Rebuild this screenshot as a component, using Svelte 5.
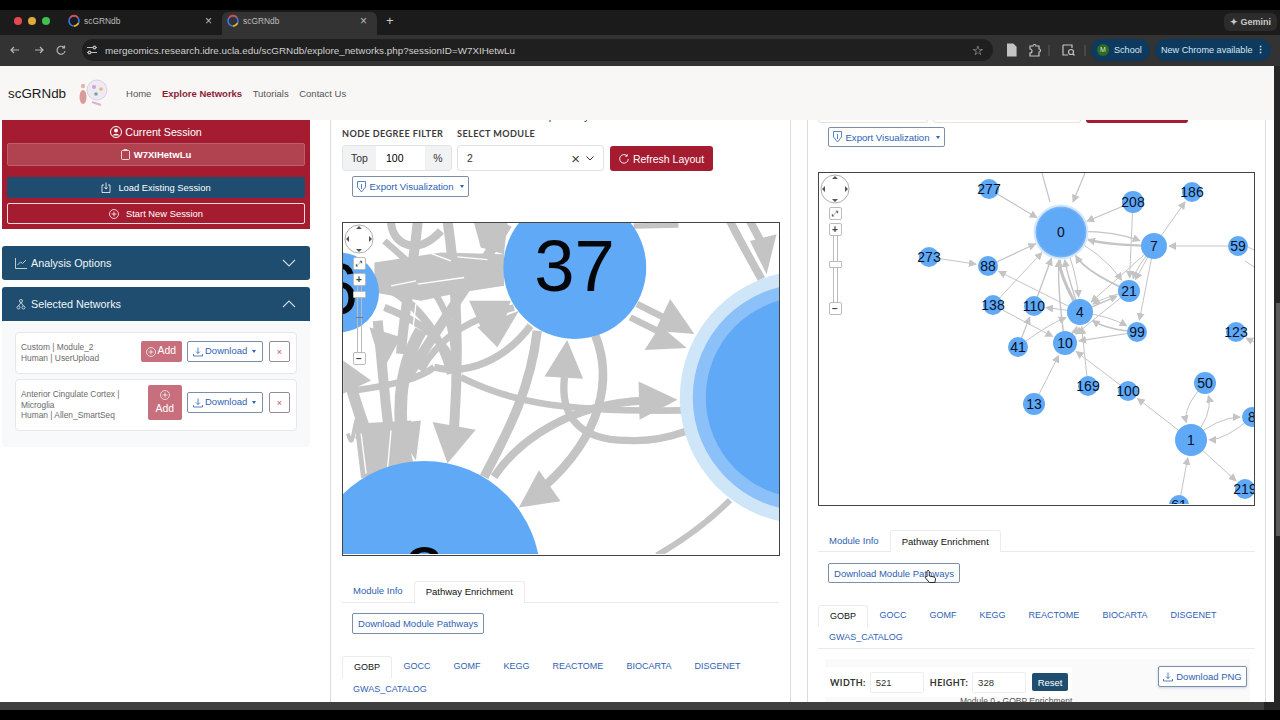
<script lang="ts">
  type GraphNode = { id: string; x: number; y: number; r: number }

  const nodes: GraphNode[] = [
    { id: '277', x: 171, y: 17, r: 10 },
    { id: '208', x: 315, y: 30, r: 11 },
    { id: '186', x: 374, y: 20, r: 10 },
    { id: '7', x: 336, y: 74, r: 13 },
    { id: '59', x: 420, y: 74, r: 10 },
    { id: '273', x: 111, y: 85, r: 10 },
    { id: '88', x: 170, y: 94, r: 10 },
    { id: '21', x: 311, y: 119, r: 11 },
    { id: '138', x: 175, y: 133, r: 10 },
    { id: '110', x: 216, y: 134, r: 10 },
    { id: '4', x: 262, y: 140, r: 13 },
    { id: '99', x: 319, y: 160, r: 10 },
    { id: '123', x: 418, y: 160, r: 10 },
    { id: '41', x: 200, y: 175, r: 10 },
    { id: '10', x: 247, y: 171, r: 12 },
    { id: '169', x: 270, y: 214, r: 10 },
    { id: '100', x: 310, y: 219, r: 10 },
    { id: '13', x: 216, y: 232, r: 11 },
    { id: '50', x: 387, y: 211, r: 11 },
    { id: '8', x: 434, y: 245, r: 10 },
    { id: '1', x: 373, y: 268, r: 16 },
    { id: '219', x: 427, y: 317, r: 10 },
    { id: '61', x: 361, y: 333, r: 10 }
  ]

  const hub = { id: '0', x: 243, y: 60, r: 26 }
  const byId = Object.fromEntries([...nodes, hub].map((n) => [n.id, n]))

  // from, to, bend, stroke width
  const edges: [string, string, number, number][] = [
    ['277', '0', 0, 1.2], ['208', '0', 0, 1.2], ['7', '186', 0, 1], ['59', '7', 0, 1],
    ['273', '88', 0, 1], ['88', '0', 0, 1.2], ['138', '0', 0, 1], ['110', '0', 0, 1.4],
    ['4', '0', -12, 3], ['4', '0', -4, 1.4], ['10', '0', -6, 1.4], ['0', '4', -6, 1],
    ['7', '0', -6, 2.4], ['0', '7', -10, 1.2], ['21', '0', -14, 1.8], ['0', '21', -12, 1],
    ['208', '21', 0, 1], ['7', '21', 0, 1], ['7', '21', 5, 1], ['7', '99', 0, 1],
    ['7', '4', 0, 1], ['4', '88', 0, 1], ['4', '21', 0, 1.4], ['21', '4', 4, 1],
    ['4', '110', 0, 1], ['4', '99', -6, 1], ['99', '4', -8, 1.4], ['99', '10', 0, 1.2],
    ['21', '10', 0, 1], ['10', '4', 4, 1], ['41', '4', -5, 1], ['41', '110', 0, 1.2],
    ['138', '10', 0, 1], ['13', '10', 0, 1], ['169', '4', 0, 1], ['100', '10', 0, 1],
    ['1', '100', 0, 1], ['1', '50', 16, 1], ['50', '1', 16, 1], ['1', '8', -12, 1],
    ['8', '1', -12, 1], ['1', '219', 0, 1], ['61', '1', 0, 1]
  ]

  function edgePath(from: string, to: string, bend: number) {
    const a = byId[from]
    const b = byId[to]
    const dx = b.x - a.x
    const dy = b.y - a.y
    const len = Math.hypot(dx, dy)
    const ux = dx / len
    const uy = dy / len
    const mx = (a.x + b.x) / 2 - uy * bend
    const my = (a.y + b.y) / 2 + ux * bend
    const tx = b.x - mx
    const ty = b.y - my
    const tl = Math.hypot(tx, ty)
    const ex = b.x - (tx / tl) * (b.r + 2)
    const ey = b.y - (ty / tl) * (b.r + 2)
    return `M${a.x} ${a.y}Q${mx} ${my} ${ex} ${ey}`
  }

  const subTabs = ['GOCC', 'GOMF', 'KEGG', 'REACTOME', 'BIOCARTA', 'DISGENET']
  const sessions = [
    { lines: ['Custom | Module_2', 'Human | UserUpload'], stacked: false },
    { lines: ['Anterior Cingulate Cortex |', 'Microglia', 'Human | Allen_SmartSeq'], stacked: true }
  ]

  // big strokes of the zoomed-in left graph, traced in 3x coordinates
  const zoomedEdges: [string, number][] = [
    ['M590 330C570 500 510 620 430 770', 28],
    ['M765 345C815 470 790 640 610 800', 26],
    ['M672 470C660 570 700 660 860 660C930 665 990 650 1040 632', 22],
    ['M360 470C500 540 640 575 1030 570', 20],
    ['M460 770C540 650 700 550 910 540', 24],
    ['M890 250L980 295', 20],
    ['M870 290L960 335', 20],
    ['M1170 840C1110 900 1030 960 950 1006', 18],
    ['M1170 0C1200 60 1240 130 1265 175', 24],
    ['M1230 0L1275 85', 24],
    ['M880 15L1015 12', 16],
    ['M150 0C150 70 230 110 300 30', 24],
    ['M320 0C350 200 355 400 340 620', 30],
    ['M200 740C165 600 170 450 240 330', 38],
    ['M570 315C490 420 380 465 280 440', 22],
    ['M280 440C240 470 180 490 40 510', 20],
    ['M130 60C300 200 350 300 340 460', 20],
    ['M500 10C430 130 300 300 200 470', 30],
    ['M100 180C230 240 300 340 330 460', 24],
    ['M130 260C260 310 330 380 340 450', 22],
    ['M240 450C300 340 400 290 520 260', 20],
    ['M30 500C60 600 90 690 140 760', 34],
    ['M110 300C130 500 140 650 160 740', 30],
    ['M20 640C40 700 30 620 60 560', 12],
    ['M230 5C220 120 190 260 180 400', 30]
  ]
  const zoomedHeads = [
    '100,125 300,95 490,100 490,195 360,215 240,240 100,215',
    '400,6 500,6 490,100 420,80',
    '40,610 210,600 210,740 60,775',
    '595,750 660,843 535,862',
    '680,358 728,475 612,468',
    '895,483 1012,538 898,598',
    '990,235 1063,340 945,330',
    '960,315 1040,382 913,388',
    '1310,40 1280,160 1230,60',
    '275,605 405,628 320,730',
    '385,240 510,240 470,380 420,320',
    '535,270 470,380 410,320',
    '85,320 180,350 125,450',
    '240,600 225,720 150,610',
    '40,650 130,620 120,730',
    '6,420 90,480 6,520'
  ]
  // thin gaps left between the overlapping strokes
  const zoomedGaps = ['M350 108L440 116', 'M230 190L370 170', 'M150 195L225 180', 'M250 90L330 120', 'M225 250L215 330', 'M60 640L75 760', 'M150 630L140 740']
</script>

<div class="browser">
  <div class="tabstrip">
    <div class="lights"><i class="red"></i><i class="amber"></i><i class="green"></i></div>
    {#each [0, 1] as t}
      <div class="tab" class:active={t === 1}>
        <svg width="14" height="14" viewBox="0 0 14 14"><circle cx="7" cy="7" r="5" fill="none" stroke="#3b78e7" stroke-width="1.6" /><path d="M3 3.500A5 5 0 0 1 11 3.500" fill="none" stroke="#e8493a" stroke-width="1.6" /><path d="M11.500 9A5 5 0 0 1 7 12" fill="none" stroke="#f5b400" stroke-width="1.6" /></svg>
        <span>scGRNdb</span>
        <b>×</b>
      </div>
    {/each}
    <span class="newtab">+</span>
    <div class="gemini">✦ Gemini</div>
  </div>
  <div class="toolbar">
    <svg class="nav" width="60" height="14" viewBox="0 0 60 14" fill="none" stroke="#b5b5b5" stroke-width="1.2"><path d="M11 7H3M6 4 3 7l3 3M27 7h8M32 4l3 3-3 3M56 4.500A4 4 0 1 0 57 8M56.500 2.500v2.500H54" /></svg>
    <div class="omnibox">
      <svg width="14" height="14" viewBox="0 0 14 14" fill="none" stroke="#bbb" stroke-width="1.2"><path d="M2 4.500h6M11 4.500h1M2 9.500h1M6 9.500h6" /><circle cx="9.500" cy="4.500" r="1.300" /><circle cx="4.500" cy="9.500" r="1.300" /></svg>
      <span class="url">mergeomics.research.idre.ucla.edu/scGRNdb/explore_networks.php?sessionID=W7XIHetwLu</span>
      <span class="star">☆</span>
    </div>
    <svg class="tools" width="84" height="16" viewBox="0 0 84 16" fill="none" stroke="#c4c4c4" stroke-width="1.2"><path d="M0 2h6l3 3v9H0z" fill="#c4c4c4" /><path d="M23 4h3a1.500 1.500 0 0 1 3 0h3v3a1.500 1.500 0 0 1 0 3v4H23v-3a1.500 1.500 0 0 0 0-4z" /><path d="M42 3v11" stroke="#555" /><path d="M56 3h9v3M56 3v10h5" /><circle cx="64" cy="10" r="2.500" /><path d="M66 12l1.500 1.500" /><path d="M78 3v11" stroke="#555" /></svg>
    <div class="pill school"><i>M</i>School</div>
    <div class="pill update">New Chrome available <b>⋮</b></div>
  </div>
</div>

<div class="frame">
  <div class="page">
    <header class="topnav">
      <span class="brand">scGRNdb</span>
      <svg class="logo" width="34" height="30" viewBox="0 0 34 30">
        <ellipse cx="8" cy="19" rx="3.500" ry="7" fill="#d99a9a" />
        <circle cx="8" cy="8" r="2.200" fill="#e2b5a8" />
        <circle cx="22" cy="12" r="10" fill="#efe9f3" stroke="#ddd2e4" />
        <circle cx="19" cy="9" r="2" fill="#c9a4d6" />
        <circle cx="26" cy="11" r="1.800" fill="#e6b86c" />
        <circle cx="21" cy="16" r="1.800" fill="#6fa99a" />
        <path d="M17 24l9 3" stroke="#d8b4c8" stroke-width="2" />
      </svg>
      <nav>
        <a href="#home">Home</a>
        <a href="#explore" class="current">Explore Networks</a>
        <a href="#tutorials">Tutorials</a>
        <a href="#contact">Contact Us</a>
      </nav>
    </header>

    <div class="workspace">
      <aside class="sidebar">
        <section class="session">
          <h2>
            <svg width="12" height="12" viewBox="0 0 12 12"><circle cx="6" cy="6" r="5.500" fill="none" stroke="#fff" /><circle cx="6" cy="4.500" r="2" fill="#fff" /><path d="M2.500 9.500a3.800 3 0 0 1 7 0" fill="#fff" /></svg>
            Current Session
          </h2>
          <div class="session-id">
            <svg width="9" height="11" viewBox="0 0 9 11" fill="none" stroke="#fff" stroke-width=".8"><rect x=".5" y="1.500" width="8" height="9" rx="1" /><path d="M3 1.500V.5h3v1" /></svg>
            W7XIHetwLu
          </div>
          <button class="load">
            <svg width="10" height="11" viewBox="0 0 10 11" fill="none" stroke="#fff" stroke-width=".8"><path d="M3 3H1v7.500h8V3H7M5 .5V7M3.300 5.300 5 7l1.700-1.700" /></svg>
            Load Existing Session
          </button>
          <button class="start">
            <svg width="10" height="10" viewBox="0 0 10 10" fill="none" stroke="#fff" stroke-width=".8"><circle cx="5" cy="5" r="4.500" /><path d="M5 2.500v5M2.500 5h5" /></svg>
            Start New Session
          </button>
        </section>

        <div class="accordion">
          <div class="acc-head">
            <svg width="12" height="12" viewBox="0 0 12 12" fill="none" stroke="#cfdbe5" stroke-width=".9"><path d="M.5 1v10.500H12M2.500 8l3-3 2 1.500L11 3" /></svg>
            <span>Analysis Options</span>
            <svg class="chev" width="14" height="8" viewBox="0 0 14 8" fill="none" stroke="#cfdbe5" stroke-width="1.100"><path d="M1 1l6 6 6-6" /></svg>
          </div>
        </div>

        <div class="accordion">
          <div class="acc-head">
            <svg width="12" height="12" viewBox="0 0 12 12" fill="none" stroke="#cfdbe5" stroke-width=".9"><circle cx="6" cy="3" r="1.500" /><circle cx="3.500" cy="9.500" r="1.500" /><circle cx="8.500" cy="9.500" r="1.500" /><path d="M6 4.500 3.500 8M6 4.500 8.500 8" /></svg>
            <span>Selected Networks</span>
            <svg class="chev" width="14" height="8" viewBox="0 0 14 8" fill="none" stroke="#cfdbe5" stroke-width="1.100"><path d="M1 7l6-6 6 6" /></svg>
          </div>
          <div class="acc-body">
            {#each sessions as s}
              <div class="net-card" class:tall={s.stacked}>
                <div class="net-text">
                  {#each s.lines as line}<div>{line}</div>{/each}
                </div>
                <button class="add" class:stacked={s.stacked}>
                  <svg width="10" height="10" viewBox="0 0 10 10" fill="none" stroke="#fff" stroke-width=".7"><circle cx="5" cy="5" r="4.500" /><path d="M5 2.500v5M2.500 5h5" /></svg>
                  Add
                </button>
                <button class="download">
                  <svg width="10" height="10" viewBox="0 0 10 10" fill="none" stroke="#2f62b5" stroke-width=".8"><path d="M5 .5V6.500M3 4.500 5 6.500l2-2M.5 7v2h9V7" /></svg>
                  Download <i class="caret"></i>
                </button>
                <button class="remove">×</button>
              </div>
            {/each}
          </div>
        </div>
      </aside>

      <main class="column left-col">
        <div class="controls">
          <div class="clipped-title"><span>Network visualization for the selected pathway modules</span></div>
          <div class="field-row">
            <div class="field">
              <label for="top-a">Node Degree Filter</label>
              <div class="input-group">
                <span>Top</span><input id="top-a" value="100" /><span>%</span>
              </div>
            </div>
            <div class="field">
              <label for="mod-a">Select Module</label>
              <div class="select" id="mod-a"><span>2</span><em>×</em><svg width="8" height="5" viewBox="0 0 8 5" fill="none" stroke="#333"><path d="M.5.5 4 4 7.500.5" /></svg></div>
            </div>
            <button class="refresh">
              <svg width="10" height="10" viewBox="0 0 10 10" fill="none" stroke="#fff" stroke-width=".9"><path d="M8 1.800A4.300 4.300 0 1 0 9.300 5M8.200.2v2H6.200" /></svg>
              Refresh Layout
            </button>
          </div>
          <button class="export">
            <svg width="9" height="12" viewBox="0 0 9 12" fill="none" stroke="#2f62b5" stroke-width=".8"><path d="M.5.5h8v5.500L4.500 11 .5 6zM4.500 3v5" /></svg>
            Export Visualization <i class="caret"></i>
          </button>
        </div>

        <div class="graph">
          <svg viewBox="6 6 1311 996" width="436" height="331">
            <g fill="none" stroke="#c4c4c4" stroke-linecap="butt">
              {#each zoomedEdges as [d, w]}<path {d} stroke-width={w} />{/each}
            </g>
            <g fill="#c4c4c4">
              {#each zoomedHeads as points}<polygon {points} />{/each}
            </g>
            <g fill="none" stroke="#fff" stroke-width="4">
              {#each zoomedGaps as d}<path {d} />{/each}
            </g>
            <circle cx="703" cy="140" r="215" fill="#60a9f6" />
            <circle cx="-6" cy="215" r="120" fill="#60a9f6" />
            <circle cx="250" cy="1072" r="350" fill="#60a9f6" />
            <circle cx="1400" cy="531" r="381" fill="#cfe5f8" />
            <circle cx="1400" cy="531" r="342" fill="#8cc0f8" />
            <circle cx="1400" cy="531" r="303" fill="#60a9f6" />
            <text x="702" y="210" class="big-label">37</text>
            <text x="-10" y="280" class="big-label">6</text>
            <text x="250" y="1135" class="big-label">2</text>
          </svg>
          <div class="panzoom">
            <svg width="32" height="32" viewBox="0 0 32 32"><circle cx="16" cy="16" r="14" fill="#fff" stroke="#999" stroke-width=".8" /><path d="M16 3l-3 3h6zM16 29l-3-3h6zM3 16l3-3v6zM29 16l-3-3v6z" fill="#555" /></svg>
            <span class="zbtn fit">⤢</span>
            <span class="zbtn">+</span>
            <div class="slider zs-left"><span class="thumb"></span><span class="tick"></span></div>
            <span class="zbtn">−</span>
          </div>
        </div>

        <div class="tabs main-tabs">
          <a href="#info">Module Info</a>
          <a href="#path" class="on">Pathway Enrichment</a>
        </div>
        <button class="outline dl-path">Download Module Pathways</button>
        <div class="tabs sub-tabs">
          <a href="#gobp" class="on">GOBP</a>
          {#each subTabs as t}<a href="#{t}">{t}</a>{/each}
          <a href="#gwas">GWAS_CATALOG</a>
        </div>
      </main>

      <section class="column right-col">
        <div class="card">
          <div class="clipped-row"><i class="c1"></i><i class="c2"></i><i class="c3"></i></div>
          <button class="export">
            <svg width="9" height="12" viewBox="0 0 9 12" fill="none" stroke="#2f62b5" stroke-width=".8"><path d="M.5.5h8v5.500L4.500 11 .5 6zM4.500 3v5" /></svg>
            Export Visualization <i class="caret"></i>
          </button>
          <div class="graph">
            <svg viewBox="1 1 435 331" width="435" height="331">
              <defs>
                <marker id="head" viewBox="0 0 10 10" refX="9" refY="5" markerWidth="8" markerHeight="8" markerUnits="userSpaceOnUse" orient="auto">
                  <path d="M0 0 10 5 0 10z" fill="#c4c4c4" />
                </marker>
              </defs>
              <path d="M224 1l8 29M267 1l-12 29" stroke="#c4c4c4" stroke-width="1.200" marker-end="url(#head)" fill="none" />
              <path d="M436 78l-6-3M436 95l-9-6M436 170l-8-4" stroke="#c4c4c4" stroke-width="1" marker-end="url(#head)" fill="none" />
              {#each edges as [from, to, bend, w]}
                <path d={edgePath(from, to, bend)} fill="none" stroke="#c4c4c4" stroke-width={w} marker-end="url(#head)" />
              {/each}
              <circle cx={hub.x} cy={hub.y} r="27.500" fill="#d5e8fa" />
              <circle cx={hub.x} cy={hub.y} r="25.500" fill="#76b3f7" />
              <circle cx={hub.x} cy={hub.y} r="24" fill="#60a9f6" />
              <text x={hub.x} y={hub.y + 5} class="small-label">{hub.id}</text>
              {#each nodes as n}
                <circle cx={n.x} cy={n.y} r={n.r} fill="#60a9f6" />
                <text x={n.x} y={n.y + 5} class="small-label">{n.id}</text>
              {/each}
            </svg>
            <div class="panzoom">
              <svg width="32" height="32" viewBox="0 0 32 32"><circle cx="16" cy="16" r="14" fill="#fff" stroke="#999" stroke-width=".8" /><path d="M16 3l-3 3h6zM16 29l-3-3h6zM3 16l3-3v6zM29 16l-3-3v6z" fill="#555" /></svg>
              <span class="zbtn fit">⤢</span>
              <span class="zbtn">+</span>
              <div class="slider zs-right"><span class="thumb"></span></div>
              <span class="zbtn">−</span>
            </div>
          </div>

          <div class="tabs main-tabs">
            <a href="#info">Module Info</a>
            <a href="#path" class="on">Pathway Enrichment</a>
          </div>
          <button class="outline dl-path">Download Module Pathways</button>
          <div class="tabs sub-tabs ruled">
            <a href="#gobp" class="on">GOBP</a>
            {#each subTabs as t}<a href="#{t}">{t}</a>{/each}
            <a href="#gwas">GWAS_CATALOG</a>
          </div>
          <div class="enrich">
            <div class="dims">
              <label for="w">Width:</label><input id="w" value="521" />
              <label for="h">Height:</label><input id="h" value="328" />
              <button class="reset">Reset</button>
            </div>
            <button class="outline png">
              <svg width="10" height="10" viewBox="0 0 10 10" fill="none" stroke="#2f62b5" stroke-width=".8"><path d="M5 .5V6.500M3 4.500 5 6.500l2-2M.5 7v2h9V7" /></svg>
              Download PNG
            </button>
            <div class="chart-title">Module 0 - GOBP Enrichment</div>
          </div>
          <svg class="cursor" width="14" height="16" viewBox="0 0 14 16"><path d="M4 1.500c1 0 1.300.6 1.300 1.500v4l4 .8c1.500.3 2.200 1 2.200 2.200l-.6 3.500H5.500L1.500 9c-.6-1 .5-2 1.500-1.200V3c0-1 .3-1.500 1-1.500z" fill="#fff" stroke="#222" /></svg>
        </div>
      </section>
    </div>
  </div>
  <div class="gutter"><span></span></div>
</div>

<div class="bottom"><div class="scroll-gray"></div></div>

<style>
  :global(body) {
    background: #000;
    overflow: hidden;
    font-family: 'Liberation Sans', Arial, sans-serif;
  }

  /* browser chrome */
  .browser {
    padding-top: 10px;
    background: #000;
    color: #d5d5d5;
  }

  .tabstrip {
    height: 25px;
    background: #1b1b1b;
    display: flex;
    align-items: flex-end;
    padding-left: 14px;
  }

  .lights {
    display: flex;
    gap: 6px;
    width: 53px;
    align-self: center;
    margin-bottom: 4px;
  }

  .lights i {
    width: 8px;
    height: 8px;
    border-radius: 50%;
  }

  .red { background: #e5484d; }
  .amber { background: #e2a93b; }
  .green { background: #3fc14f; }

  .tab {
    width: 155px;
    height: 23px;
    padding: 0 10px 5px 0;
    box-sizing: border-box;
    display: flex;
    align-items: center;
    gap: 3px;
    font-size: 8.400px;
    color: #bdbdbd;
  }

  .tab.active {
    background: #333;
    border-radius: 6px 6px 0 0;
    padding-left: 4px;
  }

  .tab svg {
    flex: none;
  }

  .tab span {
    flex: 1;
  }

  .tab b {
    font-weight: 400;
    font-size: 12px;
  }

  .newtab {
    margin-left: 9px;
    font-size: 13px;
    color: #ccc;
    align-self: center;
    margin-bottom: 4px;
  }

  .gemini {
    margin-left: auto;
    margin-right: 3px;
    align-self: center;
    margin-bottom: 2px;
    background: #2c2c2c;
    border-radius: 6px;
    padding: 4px 6px;
    font-size: 9px;
    font-weight: 700;
    color: #c9c9c9;
  }

  .toolbar {
    height: 31px;
    background: #333;
    box-sizing: border-box;
    display: flex;
    align-items: center;
    padding: 0 0 1px 8px;
  }

  .nav {
    flex: none;
  }

  .omnibox {
    width: 911px;
    height: 22px;
    margin-left: 14px;
    border-radius: 11px;
    background: #1f1f1f;
    display: flex;
    align-items: center;
    padding: 0 0 0 3px;
    box-sizing: border-box;
    gap: 6px;
  }

  .url {
    font-size: 9.850px;
    color: #d0d0d0;
    flex: 1;
  }

  .star {
    font-size: 13px;
    margin-right: 9px;
    color: #ddd;
  }

  .tools {
    margin-left: 14px;
    flex: none;
  }

  .pill {
    height: 22px;
    border-radius: 11px;
    display: flex;
    align-items: center;
    background: #0d3a5e;
    font-size: 9.100px;
    color: #d6e6f4;
  }

  .school {
    width: 59px;
    margin-left: 0;
    padding-left: 6px;
    gap: 5px;
    box-sizing: border-box;
  }

  .school i {
    width: 12px;
    height: 12px;
    border-radius: 50%;
    background: #2d6a22;
    color: #d8e8d0;
    font-style: normal;
    font-size: 7px;
    text-align: center;
    line-height: 12px;
  }

  .update {
    margin-left: 5px;
    padding: 0 6px;
    width: 116px;
    box-sizing: border-box;
    white-space: nowrap;
    justify-content: space-between;
  }

  /* page frame */
  .frame {
    display: flex;
    height: 636px;
  }

  .page {
    width: 1274px;
    flex: none;
    height: 636px;
    background: #fff;
    overflow: hidden;
  }

  .gutter {
    flex: 1;
    background: #262626;
    padding: 237px 0 166px 2px;
    box-sizing: border-box;
  }

  .gutter span {
    display: block;
    height: 100%;
    background: #5c5c5c;
  }

  .topnav {
    height: 54px;
    background: #f8f7f5;
    display: flex;
    align-items: center;
    padding-left: 8px;
    position: relative;
    z-index: 2;
  }

  .brand {
    font-size: 13.400px;
    color: #1a1a1a;
  }

  .logo {
    margin-left: 9px;
  }

  .topnav nav {
    display: flex;
    gap: 10.500px;
    margin-left: 17px;
    font-size: 9.500px;
  }

  .topnav a {
    color: #555;
    text-decoration: none;
  }

  .topnav a.current {
    color: #8c1d35;
    font-weight: 700;
  }

  .workspace {
    height: 582px;
    display: flex;
    overflow: hidden;
  }

  /* sidebar */
  .sidebar {
    width: 308px;
    margin-left: 2px;
    flex: none;
    font-size: 10px;
    color: #fff;
  }

  .session {
    height: 109px;
    background: #a51c30;
    padding: 0 5px;
    box-sizing: border-box;
    display: flex;
    flex-direction: column;
  }

  .session h2 {
    margin: 0;
    height: 23px;
    font-size: 10.700px;
    font-weight: 400;
    display: flex;
    align-items: center;
    justify-content: center;
    gap: 3px;
  }

  .session-id {
    height: 23px;
    background: #b14351;
    border: 1px solid #bd606d;
    border-radius: 2px;
    box-sizing: border-box;
    display: flex;
    align-items: center;
    justify-content: center;
    gap: 4px;
    font-weight: 700;
    font-size: 9.500px;
  }

  .session button {
    font: inherit;
    font-size: 9.400px;
    color: #fff;
    height: 21px;
    border-radius: 2px;
    display: flex;
    align-items: center;
    justify-content: center;
    gap: 7px;
    cursor: pointer;
  }

  .load {
    margin-top: 11px;
    background: #1e4d6f;
    border: 0;
  }

  .start {
    margin-top: 5px;
    height: 20px;
    background: #a51c30;
    border: 1px solid #f5d9dd;
  }

  .accordion {
    margin-top: 7px;
    background: #f8f9fa;
    border-radius: 3px;
  }

  .accordion:nth-child(2) {
    margin-top: 17px;
  }

  .acc-head {
    height: 34px;
    background: #1e4d6f;
    border-radius: 3px 3px 0 0;
    display: flex;
    align-items: center;
    padding: 0 14px 0 13px;
    gap: 4px;
    font-size: 10.800px;
    color: #f1f5f8;
  }

  .accordion:nth-child(2) .acc-head {
    border-radius: 3px;
  }

  .acc-head span {
    flex: 1;
  }

  .acc-body {
    padding: 11px 13px 16px;
    display: flex;
    flex-direction: column;
    gap: 5px;
  }

  .net-card {
    background: #fff;
    border: 1px solid #e6e7e9;
    border-radius: 4px;
    padding: 5px 6px 5px 5px;
    display: flex;
    align-items: center;
    color: #6a6a6a;
    font-size: 8.400px;
    line-height: 10.700px;
    min-height: 42px;
    box-sizing: border-box;
  }

  .net-card.tall {
    min-height: 52px;
  }

  .net-card button {
    margin-bottom: 3px;
  }

  .net-card.tall button {
    margin-bottom: 5px;
  }

  .net-text {
    flex: 1;
  }

  .add {
    font: inherit;
    font-size: 10.400px;
    background: #c76f7c;
    color: #fff;
    border: 0;
    border-radius: 2px;
    height: 21px;
    padding: 0 6px 0 5px;
    display: flex;
    align-items: center;
    gap: 2px;
    margin-right: 5px;
  }

  .add.stacked {
    flex-direction: column;
    height: 35px;
    padding: 5px 8px;
    gap: 4px;
  }

  .download {
    font: inherit;
    font-size: 9.500px;
    color: #2f62b5;
    background: #fff;
    border: 1px solid #7d8ea8;
    border-radius: 2px;
    height: 21px;
    width: 76px;
    padding: 0 5px;
    display: flex;
    align-items: center;
    gap: 2px;
    white-space: nowrap;
    margin-right: 6px;
  }

  .remove {
    width: 21px;
    height: 21px;
    padding: 0;
    background: #fff;
    border: 1px solid #9a8a8e;
    border-radius: 2px;
    color: #c25667;
    font-size: 9px;
  }

  .caret {
    display: inline-block;
    margin-left: 3px;
    border: 2.500px solid transparent;
    border-top: 3px solid currentColor;
    border-bottom: 0;
    vertical-align: middle;
  }

  /* columns */
  .column {
    flex: none;
    box-sizing: border-box;
    position: relative;
  }

  .left-col {
    width: 461px;
    margin-left: 20px;
    border-left: 1px solid #ddd;
    border-right: 1px solid #ddd;
    padding-left: 11px;
  }

  .controls {
    height: 102px;
  }

  .clipped-title {
    height: 2px;
    overflow: hidden;
    margin-left: 22px;
    font-size: 11px;
    color: #444;
  }

  .clipped-title span {
    display: block;
    line-height: 12px;
    margin-top: -10px;
    white-space: nowrap;
  }

  .field-row {
    display: flex;
    align-items: flex-end;
    gap: 5px;
    margin-top: 4px;
  }

  .field label {
    display: block;
    font-family: Lato, sans-serif;
    font-weight: 700;
    font-size: 9.100px;
    letter-spacing: 0.4px;
    text-transform: uppercase;
    color: #3b3b3b;
    height: 19px;
    line-height: 15px;
  }

  .input-group {
    display: flex;
    width: 110px;
    height: 26px;
    border: 1px solid #e1e3e6;
    border-radius: 3px;
    box-sizing: border-box;
    font-size: 10.500px;
    color: #333;
    overflow: hidden;
  }

  .input-group span {
    background: #f1f2f4;
    width: 33px;
    display: flex;
    align-items: center;
    justify-content: center;
    flex: none;
  }

  .input-group span:last-child {
    width: 26px;
  }

  .input-group input {
    min-width: 0;
    flex: 1;
    border: 0;
    font: inherit;
    padding: 0 10px;
    background: #fff;
    outline: 0;
  }

  .select {
    width: 147px;
    height: 26px;
    border: 1px solid #e1e3e6;
    border-radius: 3px;
    box-sizing: border-box;
    display: flex;
    align-items: center;
    padding: 0 9px;
    font-size: 10.500px;
    color: #333;
  }

  .select span {
    flex: 1;
  }

  .select em {
    font-style: normal;
    font-size: 15px;
    margin-right: 6px;
    color: #444;
  }

  .refresh {
    font: inherit;
    font-size: 10.500px;
    width: 103px;
    height: 25px;
    margin-left: 1px;
    background: #a51c30;
    color: #fff;
    border: 0;
    border-radius: 3px;
    display: flex;
    align-items: center;
    justify-content: center;
    gap: 4px;
    white-space: nowrap;
  }

  .export {
    font: inherit;
    font-size: 9.600px;
    color: #2f62b5;
    background: #fff;
    border: 1px solid #7d8ea8;
    border-radius: 2px;
    height: 21px;
    width: 117px;
    padding: 0;
    display: flex;
    align-items: center;
    justify-content: center;
    gap: 3px;
    white-space: nowrap;
    margin: 5px 0 0 10px;
  }

  .graph {
    position: relative;
    width: 438px;
    height: 334px;
    border: 1px solid #444;
    box-sizing: border-box;
    overflow: hidden;
    background: #fff;
    line-height: 0;
  }

  .card .graph {
    width: 437px;
  }

  .big-label {
    font-size: 218px;
    text-anchor: middle;
    fill: #05060a;
    font-family: 'Liberation Sans', sans-serif;
  }

  .small-label {
    font-size: 14px;
    text-anchor: middle;
    fill: #06122a;
    font-family: 'Liberation Sans', sans-serif;
  }

  .panzoom {
    position: absolute;
    top: 0;
    left: 0;
    width: 32px;
    display: flex;
    flex-direction: column;
    align-items: center;
  }

  .zbtn {
    width: 11px;
    height: 11px;
    border: 1px solid #bbb;
    background: #fff;
    border-radius: 2px;
    font-size: 10px;
    line-height: 11px;
    font-weight: 700;
    text-align: center;
    color: #444;
    box-sizing: content-box;
    flex: none;
  }

  .fit {
    font-size: 8px;
    font-weight: 400;
    margin: 2px 0 3px;
  }

  .slider {
    width: 3px;
    border-left: 1px solid #bbb;
    border-right: 1px solid #bbb;
    position: relative;
    flex: none;
    height: 66px;
  }

  .thumb {
    position: absolute;
    left: -5px;
    width: 11px;
    height: 5px;
    background: #fff;
    border: 1px solid #bbb;
    border-radius: 1px;
  }

  .zs-left .thumb { top: 5px; }
  .zs-right .thumb { top: 25px; }

  .tick {
    position: absolute;
    left: -2px;
    top: 31px;
    width: 7px;
    height: 1px;
    background: #777;
  }

  .tabs {
    display: flex;
    flex-wrap: wrap;
    font-size: 9.500px;
  }

  .tabs a {
    color: #2f5fb3;
    text-decoration: none;
    padding: 0 11px;
    height: 22px;
    line-height: 20px;
    box-sizing: border-box;
  }

  .tabs a.on {
    color: #111;
    background: #fff;
    border: 1px solid #ececec;
    border-bottom: 0;
    border-radius: 3px 3px 0 0;
    line-height: 19px;
  }

  .main-tabs {
    border-bottom: 1px solid #e9e9e9;
    margin-top: 25px;
    height: 22px;
    width: 437px;
    box-sizing: border-box;
  }

  .card .main-tabs {
    margin-top: 24px;
  }

  .card .main-tabs a {
    line-height: 22px;
  }

  .card .main-tabs a.on {
    line-height: 21px;
  }

  .outline {
    font: inherit;
    font-size: 9.500px;
    color: #2f5fb3;
    background: #fff;
    border: 1px solid #7d8ea8;
    border-radius: 2px;
    height: 21px;
    padding: 0;
    white-space: nowrap;
  }

  .dl-path {
    display: block;
    width: 132px;
    margin: 10px 0 0 10px;
  }

  .card .dl-path {
    margin-top: 11px;
    height: 20px;
  }

  .sub-tabs {
    width: 437px;
    margin-top: 22px;
    height: 45px;
    font-size: 9px;
    box-sizing: border-box;
  }

  .sub-tabs a {
    padding: 0 11.500px;
    line-height: 21px;
  }

  .sub-tabs a.on {
    padding: 0 11px;
    line-height: 20px;
  }

  .sub-tabs a:last-child {
    padding-left: 11px;
  }

  /* right card */
  .right-col {
    width: 459px;
    margin-left: 16px;
  }

  .card {
    border-right: 1px solid #ddd;
    border-left: 1px solid #ddd;
    height: 100%;
    padding-left: 10px;
    box-sizing: border-box;
    position: relative;
  }

  .clipped-row {
    display: flex;
    height: 3px;
    gap: 5px;
  }

  .clipped-row i {
    display: block;
    height: 2px;
    border: 1px solid #e5e5e5;
    border-top: 0;
    border-radius: 0 0 3px 3px;
  }

  .c1 { width: 108px; }
  .c2 { width: 146px; }
  .c3 { width: 100px; background: #a51c30; border-color: #a51c30 !important; }

  .card .export {
    margin: 4px 0 25px 10px;
    height: 20px;
  }

  .sub-tabs.ruled {
    border-bottom: 1px solid #e9e9e9;
    height: 44px;
  }

  .enrich {
    width: 425px;
    margin: 10px 0 0 7px;
    height: 60px;
    background: #fafafa;
    position: relative;
    display: flex;
    justify-content: space-between;
    align-items: flex-start;
  }

  .dims {
    margin-top: 8px;
    height: 30px;
    width: 247px;
    background: #fff;
    display: flex;
    align-items: center;
    box-sizing: border-box;
    padding-left: 5px;
    gap: 4px;
    font-size: 9px;
  }

  .dims label {
    font-family: Lato, sans-serif;
    font-weight: 700;
    letter-spacing: 0.4px;
    text-transform: uppercase;
    color: #333;
  }

  .dims input {
    width: 54px;
    height: 21px;
    border: 1px solid #eee;
    border-radius: 2px;
    box-sizing: border-box;
    font: inherit;
    font-size: 9.500px;
    padding: 0 5px;
    margin-right: 2px;
    color: #333;
  }

  .reset {
    font: inherit;
    font-size: 9.500px;
    background: #1e4d6f;
    color: #fff;
    border: 0;
    border-radius: 2px;
    width: 36px;
    height: 18px;
    padding: 0;
  }

  .png {
    width: 89px;
    margin: 7px 3px 0 0;
    display: flex;
    align-items: center;
    justify-content: center;
    gap: 3px;
    box-shadow: 0 1px 3px rgba(47, 95, 179, 0.25);
  }

  .chart-title {
    position: absolute;
    left: 135px;
    top: 37px;
    font-size: 8.500px;
    color: #555;
    white-space: nowrap;
  }

  .cursor {
    position: absolute;
    left: 116px;
    top: 449px;
  }

  .bottom {
    height: 18px;
  }

  .scroll-gray {
    height: 8px;
    width: 1264px;
    background: #3f3f3f;
    border-right: 16px solid #262626;
  }
</style>
